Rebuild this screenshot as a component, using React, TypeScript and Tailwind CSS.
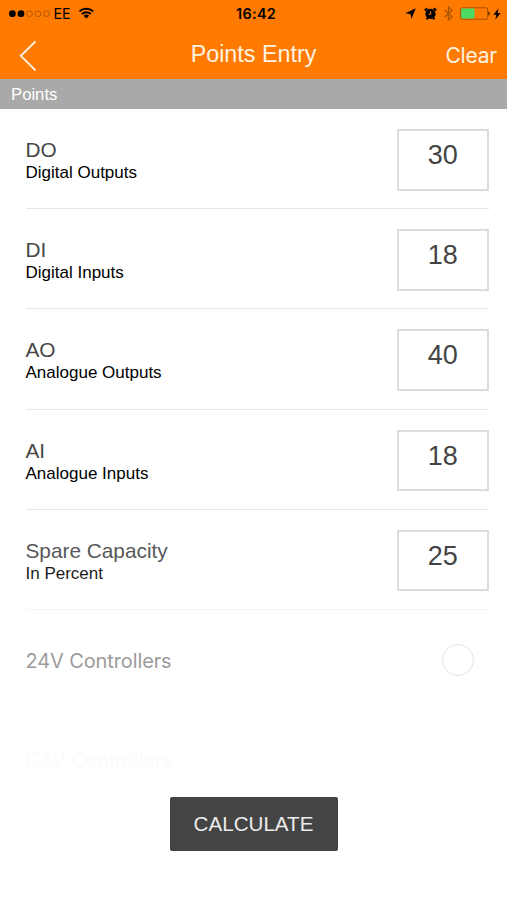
import clsx from 'clsx'

interface PointField {
  code: string
  label: string
  value: number
  codeColor?: string
  labelColor?: string
  lineColor?: string
}

const FIELDS: PointField[] = [
  { code: 'DO', label: 'Digital Outputs', value: 30 },
  { code: 'DI', label: 'Digital Inputs', value: 18 },
  { code: 'AO', label: 'Analogue Outputs', value: 40 },
  { code: 'AI', label: 'Analogue Inputs', value: 18 },
  {
    code: 'Spare Capacity',
    label: 'In Percent',
    value: 25,
    codeColor: 'text-[#585858]',
    labelColor: 'text-[#1c1c1c]',
    lineColor: 'bg-[#f4f4f4]'
  }
]

function StatusBar() {
  return (
    <div className="flex h-7 items-center text-black">
      <div className="flex w-[236px] items-center pl-[9px]">
        <svg width="42" height="8" viewBox="0 0 42 8">
          <circle cx="3.4" cy="3.7" r="3.4" />
          <circle cx="12" cy="3.7" r="3.4" />
          <g fill="none" stroke="#a85300" strokeWidth="0.9">
            <circle cx="20.5" cy="3.7" r="2.9" />
            <circle cx="29" cy="3.7" r="2.9" />
            <circle cx="37.5" cy="3.7" r="2.9" />
          </g>
        </svg>
        <span className="ml-[2.5px] font-['Inter',sans-serif] text-[14.3px] leading-none">EE</span>
        <svg className="ml-[7px] -mt-px" width="17" height="12" viewBox="0 0 17 12">
          <g fill="none" stroke="#000" strokeWidth="1.9">
            <path d="M1.4 4.4A10.1 10.1 0 0 1 15.2 4.4" />
            <path d="M3.8 7A6.6 6.6 0 0 1 12.8 7" />
          </g>
          <path d="M8.3 11.5L5.5 8.8A4 4 0 0 1 11.1 8.8Z" />
        </svg>
      </div>
      <span className="flex-1 font-['Inter',sans-serif] text-[14.3px] leading-none font-semibold tracking-[0.4px]">
        16:42
      </span>
      <div className="-mt-px flex items-center pr-[6px]">
        <svg width="11" height="11" viewBox="0 0 10 10">
          <path d="M9.8 0.2L5.9 9.7L4.9 5.4L0.2 4.8Z" />
        </svg>
        {/* Alarm clock */}
        <svg className="ml-[8px]" width="13" height="13" viewBox="0 0 13 13">
          <circle cx="6.5" cy="6.9" r="5.1" />
          <path d="M0.8 3.4L3.3 1.2M12.2 3.4L9.7 1.2M2.5 12.2L4 10.8M10.5 12.2L9 10.8" stroke="#000" strokeWidth="2" />
          <path d="M6.7 4.2V7.3H4.6" fill="none" stroke="#ff7a00" strokeWidth="1" />
        </svg>
        <svg className="ml-[7px]" width="9" height="15" viewBox="0 0 9 15">
          <path d="M0.7 4L8 10.7L4.4 14V1L8 4.3L0.7 11" fill="none" stroke="#a85300" strokeWidth="1.2" />
        </svg>
        <svg className="ml-[7px]" width="31" height="13" viewBox="0 0 31 13">
          <rect x="0.6" y="0.8" width="27" height="11.4" rx="1.6" fill="none" stroke="#9c4d00" strokeWidth="0.9" />
          <rect x="1.2" y="1.4" width="13.3" height="10.2" rx="0.8" fill="#4cd964" />
          <path d="M28.4 4.2A2.6 2.6 0 0 1 28.4 8.8Z" fill="#3d1e00" />
        </svg>
        <svg className="ml-[2px]" width="8" height="12" viewBox="0 0 8 12">
          <path d="M5.6 0.3L0.4 6.8H3.3L2.3 11.7L7.6 5.1H4.6Z" />
        </svg>
      </div>
    </div>
  )
}

function FieldRow({ field }: { field: PointField }) {
  return (
    <div className="flex h-[100.2px] flex-col pr-[18px] pl-[25.5px]">
      <div className="flex flex-1 items-start justify-between pt-5">
        <div className="pt-[9px]">
          <p className={clsx('text-[20.8px] leading-[24px]', field.codeColor ?? 'text-[#484848]')}>{field.code}</p>
          <p className={clsx('pt-px text-[17px] leading-[20px]', field.labelColor ?? 'text-black')}>{field.label}</p>
        </div>
        <div className="flex h-[61.5px] w-[92.5px] justify-center rounded-[1px] border-2 border-[#dcdcdc] pt-[8px] text-[27px] leading-[33px] text-[#444]">
          {field.value}
        </div>
      </div>
      <div className={clsx('h-px w-full', field.lineColor ?? 'bg-[#e6e6e6]')} />
    </div>
  )
}

export default function App() {
  return (
    <div className="flex h-[900px] w-[507px] flex-col overflow-hidden bg-white font-['Liberation_Sans',Arial,sans-serif]">
      <header className="h-[79px] bg-[#ff7a00] text-[#fff3e2]">
        <StatusBar />
        <div className="grid h-[51px] grid-cols-3 items-center">
          <svg className="ml-[19px]" width="18" height="32" viewBox="0 0 18 32">
            <path d="M16.5 1.3L1.8 15.8L16.5 30.3" fill="none" stroke="#fff8ee" strokeWidth="1.8" />
          </svg>
          <h1 className="pb-[2px] text-center text-[23.3px] leading-[49px] whitespace-nowrap">Points Entry</h1>
          <button className="pr-[10px] text-right font-['Inter',sans-serif] text-[21px] leading-[55px] tracking-[-0.2px]">
            Clear
          </button>
        </div>
      </header>

      <div className="h-[30px] bg-[#a9a9a9] pl-[11px] text-[16.7px] leading-[31px] text-white">Points</div>

      <main>
        {FIELDS.map((field) => (
          <FieldRow key={field.code} field={field} />
        ))}
        <div className="flex h-[101px] items-center justify-between pr-[33px] pl-[25.5px]">
          <span className="pt-px font-['Inter',sans-serif] text-[20px] tracking-[-0.12px] text-[#9b9b9b]">
            24V Controllers
          </span>
          <span className="h-8 w-8 rounded-full border border-[#e3e3e3]" />
        </div>
        <div className="flex h-[86px] items-center pl-[25.5px]">
          <span className="pt-[12px] font-['Inter',sans-serif] text-[20px] tracking-[-0.2px] text-[#fbfbfb]">
            CAV Controllers
          </span>
        </div>
      </main>

      <button className="mx-auto h-[54px] w-[168px] shrink-0 rounded-[2px] bg-[#444] pt-px text-[20.6px] text-[#ececec]">
        CALCULATE
      </button>
    </div>
  )
}
